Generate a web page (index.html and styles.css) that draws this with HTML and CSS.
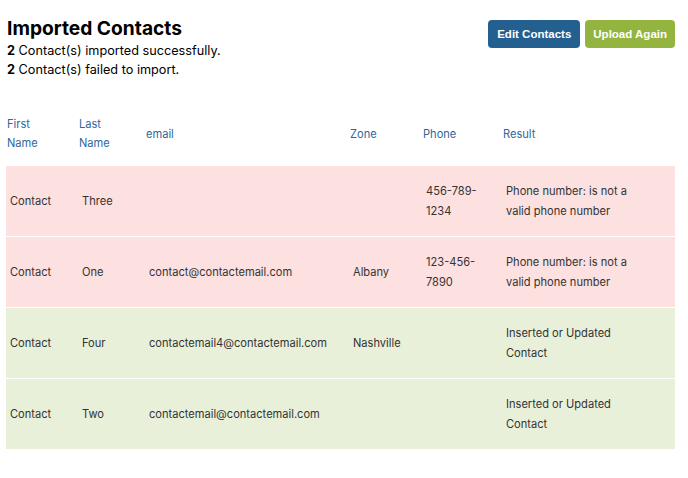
FILE: index.html
```html
<!DOCTYPE html>
<html lang="en">
<head>
    <meta charset="UTF-8">
    <meta name="viewport" content="width=device-width, initial-scale=1.0">
    <title>Imported Contacts</title>
    <link rel="stylesheet" href="styles.css">
</head>
<body>

<div class="container">
    <div class="top">
        <div class="summary">
            <h1>Imported Contacts</h1>
            <p><b>2</b> Contact(s) imported successfully.</p>
            <p><b>2</b> Contact(s) failed to import.</p>
        </div>
        <div class="actions">
            <button class="btn btn-edit">Edit Contacts</button>
            <button class="btn btn-upload">Upload Again</button>
        </div>
    </div>

    <table class="results">
        <colgroup>
            <col class="c-first">
            <col class="c-last">
            <col class="c-email">
            <col class="c-zone">
            <col class="c-phone">
            <col class="c-result">
        </colgroup>
        <thead>
            <tr>
                <th>First Name</th>
                <th>Last Name</th>
                <th>email</th>
                <th>Zone</th>
                <th>Phone</th>
                <th>Result</th>
            </tr>
        </thead>
        <tbody>
            <tr class="failed">
                <td>Contact</td>
                <td>Three</td>
                <td></td>
                <td></td>
                <td>456-789-1234</td>
                <td class="result">Phone number: is not a valid phone number</td>
            </tr>
            <tr class="failed">
                <td>Contact</td>
                <td>One</td>
                <td>contact@contactemail.com</td>
                <td>Albany</td>
                <td>123-456-7890</td>
                <td class="result">Phone number: is not a valid phone number</td>
            </tr>
            <tr class="ok">
                <td>Contact</td>
                <td>Four</td>
                <td>contactemail4@contactemail.com</td>
                <td>Nashville</td>
                <td></td>
                <td class="result">Inserted or Updated Contact</td>
            </tr>
            <tr class="ok">
                <td>Contact</td>
                <td>Two</td>
                <td>contactemail@contactemail.com</td>
                <td></td>
                <td></td>
                <td class="result">Inserted or Updated Contact</td>
            </tr>
        </tbody>
    </table>
</div>

</body>
</html>
```

FILE: styles.css
```css
body {
    font-family: Inter, "Noto Sans", sans-serif;
    background-color: #fff;
    color: #000;
    margin: 0;
    padding: 15px 13px 0 6px;
}
.top {
    display: flex;
    justify-content: space-between;
    align-items: flex-start;
}
.summary h1 {
    font-size: 19.2px;
    font-weight: 700;
    margin: 0 0 0 1px;
    line-height: 26px;
}
.summary p {
    font-size: 12.7px;
    line-height: 19px;
    margin: 0 0 0 1px;
}
.actions {
    display: flex;
    gap: 5px;
    padding-top: 5px;
}
.btn {
    font-family: "Liberation Sans", Arial, sans-serif;
    font-weight: 700;
    font-size: 11.5px;
    color: #fff;
    border: none;
    border-radius: 4px;
    height: 28px;
    padding: 0 8px;
    cursor: pointer;
}
.btn-edit {
    background-color: #23608f;
    padding: 0 9px;
}
.btn-upload {
    background-color: #93b53f;
}
.results {
    width: 669px;
    table-layout: fixed;
    border-collapse: collapse;
    margin-top: 36px;
    font-size: 11.1px;
}
.c-first { width: 72px; }
.c-last { width: 67px; }
.c-email { width: 204px; }
.c-zone { width: 73px; }
.c-phone { width: 80px; }
.c-result { width: 173px; }
th {
    font-weight: 400;
    color: #30689a;
    text-align: left;
    line-height: 19px;
    padding: 0 24px 12px 1px;
    vertical-align: middle;
}
td {
    color: #333;
    line-height: 20px;
    padding: 15px 4px;
    border-top: 1px solid #fff;
    vertical-align: middle;
}
td.result {
    padding-right: 30px;
}
tr.failed td {
    background-color: #fde0e0;
}
tr.ok td {
    background-color: #e8f0da;
}
```
